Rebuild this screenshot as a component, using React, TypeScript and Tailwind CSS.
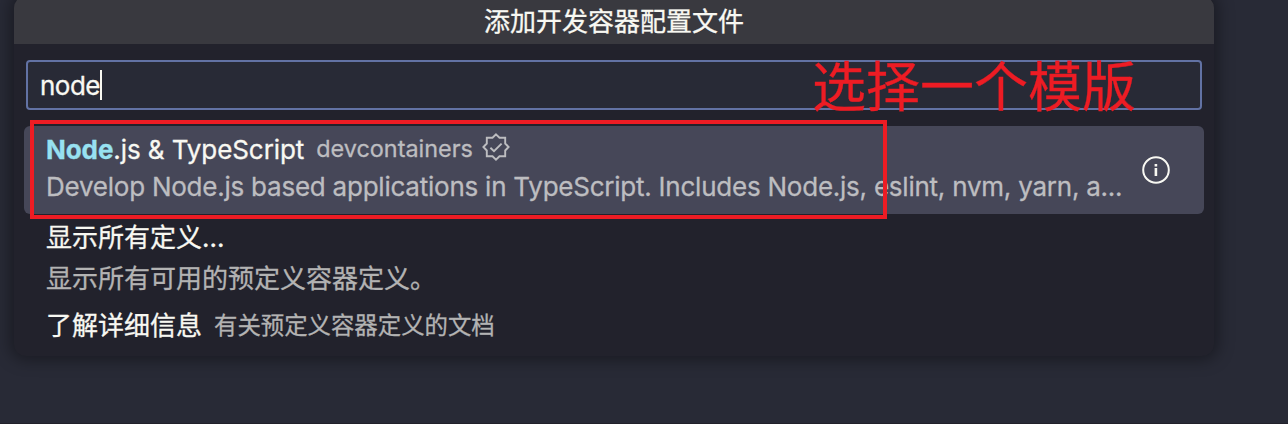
import React from "react";

function VerifiedIcon() {
  return (
    <svg width="28" height="28" viewBox="-14 -14 28 28" fill="none" stroke="#bdbdc0" strokeWidth="1.9" className="shrink-0">
      <path d="M0-12.6 3.5-9.2H9.2V-3.5L12.6 0 9.2 3.5V9.2H3.5L0 12.6-3.5 9.2H-9.2V3.5L-12.6 0-9.2-3.5V-9.2H-3.5Z" />
      <path d="M-5.6.7-2 4.2 5.6-3.4" />
    </svg>
  );
}

function InfoIcon() {
  return (
    <svg width="28" height="28" viewBox="0 0 28 28" className="shrink-0">
      <circle cx="14" cy="14" r="12.8" fill="none" stroke="#f8f8f2" strokeWidth="2" />
      <path fill="#f8f8f2" d="M12.6 8h2.6v2.4h-2.6zM12.6 12h2.6v8h-2.6z" />
    </svg>
  );
}

export default function App() {
  return (
    <div className="relative h-[424px] w-[1288px] overflow-hidden border-b border-[#21202a] bg-[#282a36] pl-[14px] font-['Inter','Noto_Sans_CJK_SC',sans-serif] text-[26px] text-[#f8f8f2] [-webkit-text-stroke:0.3px]">
      <div className="-mt-1 flex h-[360px] w-[1200px] flex-col overflow-hidden rounded-[12px] bg-[#22222c] shadow-[0_0_16px_4px_rgba(0,0,0,0.36)]">
        <div className="flex h-12 shrink-0 items-center justify-center bg-[#39393f] pt-[3px]">
          <span className="leading-[40px]">添加开发容器配置文件</span>
        </div>
        <div className="mx-3 mt-4 flex h-[50px] shrink-0 items-center rounded-[4px] border-2 border-[#6272a4] bg-[#282a36] pl-3">
          <span className="tracking-[-0.5px]">node</span>
          <span className="h-[30px] w-[2px] bg-[#f8f8f2]" />
        </div>
        <div className="mx-[10px] mt-4 flex h-[88px] shrink-0 items-center rounded-[6px] bg-[#464758] pl-[22px] pr-[34px]">
          <div className="flex min-w-0 flex-1 flex-col whitespace-nowrap pb-[4px]">
            <div className="flex h-[38px] items-center">
              <span className="tracking-[-0.08px]"><b className="text-[#97e1f1]">Node</b>.js &amp; TypeScript</span>
              <span className="ml-3 text-[23.4px] text-[#bdbdc0]">devcontainers</span>
              <span className="mb-1 ml-[9px]"><VerifiedIcon /></span>
            </div>
            <div className="h-[38px] tracking-[-0.235px] leading-[38px] text-[#bdbdc0]">Develop Node.js based applications in TypeScript. Includes Node.js, eslint, nvm, yarn, a...</div>
          </div>
          <InfoIcon />
        </div>
        <div className="flex h-[88px] shrink-0 flex-col pl-8 pt-1">
          <span className="h-10 leading-[40px]">显示所有定义...</span>
          <span className="h-10 leading-[42px] text-[#b3b3b3]">显示所有可用的预定义容器定义。</span>
        </div>
        <div className="flex h-11 shrink-0 items-center pl-8 pt-[3px]">
          <span className="leading-[40px]">了解详细信息</span>
          <span className="ml-3 text-[23.4px] leading-[40px] text-[#b3b3b3]">有关预定义容器定义的文档</span>
        </div>
      </div>
      <div className="absolute left-[30px] top-[120px] h-[99px] w-[857px] border-4 border-[#ed1c24]" />
      <div className="absolute left-[812px] top-[54px] whitespace-nowrap font-['Noto_Sans_CJK_SC',sans-serif] text-[54px] leading-[60px] text-[#ed1c24]">选择一个模版</div>
    </div>
  );
}
